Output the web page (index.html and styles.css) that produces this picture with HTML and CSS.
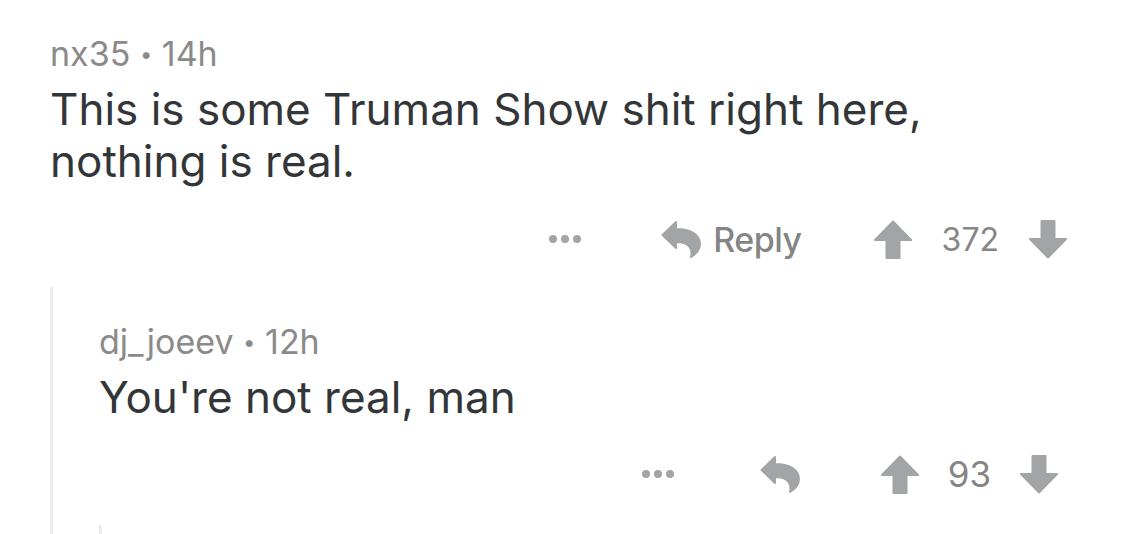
FILE: index.html
```html
<!DOCTYPE html>
<html lang="en">
<head>
    <meta charset="UTF-8">
    <title>Comments</title>
    <link rel="stylesheet" href="styles.css">
</head>
<body>

<div class="comment">
    <div class="meta">nx35 <span class="sep">&bull;</span> 14h</div>
    <div class="body">This is some Truman Show shit right here,<br>nothing is real.</div>
    <div class="actions">
        <svg class="dots" width="32" height="8" viewBox="0 0 32 8"><circle cx="4" cy="4" r="4"/><circle cx="16" cy="4" r="4"/><circle cx="28" cy="4" r="4"/></svg>
        <span class="reply">
            <svg class="reply-icon" width="40" height="38" viewBox="0 0 40 38"><path d="M1.5 15 L15 2 V9 C29 9 39 14 39 24 C39 30 35 34 30 37 C32 30 29 22 15 22 V28 Z"/></svg>
            Reply
        </span>
        <span class="votes">
            <svg class="arrow" width="38" height="39" viewBox="0 0 38 39"><path d="M19 1.5 L37 20 H25.5 V38 H12.5 V20 H1 Z"/></svg>
            <span class="score">372</span>
            <svg class="arrow down" width="38" height="39" viewBox="0 0 38 39"><path d="M19 1.5 L37 20 H25.5 V38 H12.5 V20 H1 Z"/></svg>
        </span>
    </div>

    <div class="child">
        <div class="meta">dj_joeev <span class="sep">&bull;</span> 12h</div>
        <div class="body">You're not real, man</div>
        <div class="actions">
            <svg class="dots" width="32" height="8" viewBox="0 0 32 8"><circle cx="4" cy="4" r="4"/><circle cx="16" cy="4" r="4"/><circle cx="28" cy="4" r="4"/></svg>
            <span class="reply">
                <svg class="reply-icon" width="42" height="38" viewBox="0 0 40 38"><path d="M1.5 15 L15 2 V9 C29 9 39 14 39 24 C39 30 35 34 30 37 C32 30 29 22 15 22 V28 Z"/></svg>
            </span>
            <span class="votes">
                <svg class="arrow" width="38" height="39" viewBox="0 0 38 39"><path d="M19 1.5 L37 20 H25.5 V38 H12.5 V20 H1 Z"/></svg>
                <span class="score">93</span>
                <svg class="arrow down" width="38" height="39" viewBox="0 0 38 39"><path d="M19 1.5 L37 20 H25.5 V38 H12.5 V20 H1 Z"/></svg>
            </span>
        </div>
        <div class="grandchild"></div>
    </div>
</div>

</body>
</html>
```

FILE: styles.css
```css
body {
    margin: 0;
    background: #ffffff;
    font-family: 'Inter', 'Noto Sans', sans-serif;
    overflow: hidden;
}

.comment {
    padding: 34px 58px 0 50px;
}

.meta {
    font-size: 34px;
    line-height: 40px;
    color: #8a8a8a;
}

.sep {
    font-size: 22px;
    vertical-align: 4px;
}

.body {
    font-size: 44px;
    line-height: 52px;
    color: #333638;
    margin-top: 9px;
}

.actions {
    display: flex;
    justify-content: flex-end;
    align-items: center;
    height: 46px;
    margin-top: 29px;
}

.actions svg {
    fill: #a2a4a5;
}

.arrow path,
.reply-icon path {
    stroke: #a2a4a5;
    stroke-width: 2;
    stroke-linejoin: round;
}

.dots {
    margin-right: 80px;
}

.reply {
    display: flex;
    align-items: center;
    gap: 12px;
    font-size: 34px;
    font-weight: 500;
    letter-spacing: -0.5px;
    color: #858585;
    margin-right: 72px;
}

.votes {
    display: flex;
    align-items: center;
}

.score {
    font-size: 32px;
    color: #858585;
    margin: 0 30px;
}

.arrow.down {
    transform: rotate(180deg);
}

.child {
    border-left: 3px solid #ececec;
    margin-top: 25px;
    padding-left: 46px;
    padding-top: 35px;
}

.child .actions {
    margin-top: 28px;
    margin-right: 9px;
}

.child .dots {
    margin-right: 85px;
}

.child .reply {
    margin-right: 80px;
}

.child .score {
    font-size: 35px;
    margin: 0 29px;
}

.grandchild {
    border-left: 3px solid #ececec;
    margin-top: 28px;
    height: 30px;
}
```
